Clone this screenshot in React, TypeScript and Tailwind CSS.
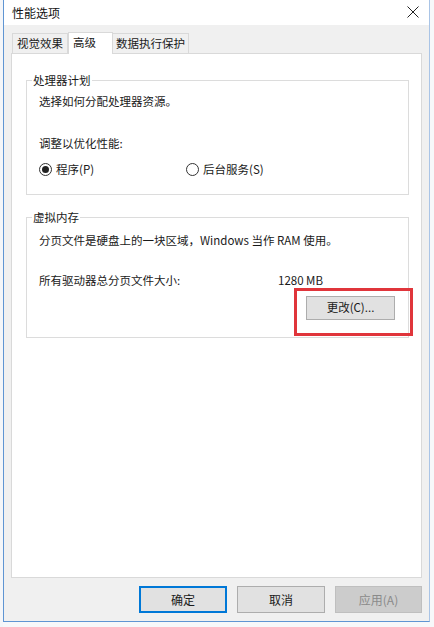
import React from "react";

const font = { fontFamily: '"Noto Sans CJK SC", "Noto Sans", sans-serif' };

function Radio({ checked, label }: { checked: boolean; label: string }) {
  return (
    <div className="flex items-center gap-[4px]">
      <div className="w-[13px] h-[13px] rounded-full border border-[#333333] bg-white flex items-center justify-center">
        {checked && <div className="w-[7px] h-[7px] rounded-full bg-[#222222]" />}
      </div>
      <span>{label}</span>
    </div>
  );
}

export default function App() {
  return (
    <div
      className="w-[434px] h-[627px] bg-[#f7f8fa] flex text-[11.5px] text-[#1a1a1a] leading-none overflow-hidden"
      style={font}
    >
      {/* left background sliver */}
      <div className="w-[3px] h-[627px] bg-[#f4f6f9]" />

      {/* dialog */}
      <div className="w-[427px] h-[622px] border-l border-b border-[#5f95d3] border-r border-r-[#a9c4e6] flex flex-col">
        {/* title bar */}
        <div className="h-[25px] bg-white flex items-center justify-between pl-[8px] pr-[10px] shrink-0">
          <span className="text-[12px] text-[#111]">性能选项</span>
          <svg width="12" height="12" viewBox="0 0 12 12" className="mt-[-2px]">
            <path d="M0.5 0.5 L11.5 11.5 M11.5 0.5 L0.5 11.5" stroke="#222" strokeWidth="1" />
          </svg>
        </div>

        {/* body */}
        <div className="flex-1 bg-[#f0f0f0] flex flex-col pl-[7px] pr-[6px]">
          {/* tabs */}
          <div className="flex items-end h-[28px] pl-[1px]">
            <div className="h-[20px] px-[4px] border border-b-0 border-[#d9d9d9] bg-[#f0f0f0] flex items-center">
              视觉效果
            </div>
            <div className="h-[22px] px-[4px] w-[45px] border border-b-0 border-[#d9d9d9] bg-white flex items-start pt-[4px] mb-[-1px] relative z-10">
              高级
            </div>
            <div className="h-[20px] px-[3px] border border-b-0 border-l-0 border-[#d9d9d9] bg-[#f0f0f0] flex items-center">
              数据执行保护
            </div>
          </div>

          {/* tab page */}
          <div className="h-[525px] w-[411px] bg-white border border-[#d9d9d9] pl-[14px] pt-[20px]">
            {/* group 1 */}
            <fieldset className="w-[383px] h-[121px] border border-[#dcdcdc] pl-[12px] flex flex-col">
              <legend className="ml-[-7px] px-[1px] leading-[13px]">处理器计划</legend>
              <div className="mt-[9px]">选择如何分配处理器资源。</div>
              <div className="mt-[30px]">调整以优化性能:</div>
              <div className="mt-[14px] flex">
                <div className="w-[147px]">
                  <Radio checked label="程序(P)" />
                </div>
                <Radio checked={false} label="后台服务(S)" />
              </div>
            </fieldset>

            {/* group 2 */}
            <fieldset className="mt-[16px] w-[383px] h-[127px] border border-[#dcdcdc] pl-[12px] pr-[12px] flex flex-col">
              <legend className="ml-[-7px] px-[1px] leading-[13px]">虚拟内存</legend>
              <div className="mt-[11px]">分页文件是硬盘上的一块区域，Windows 当作 RAM 使用。</div>
              <div className="mt-[28px] flex">
                <span className="w-[239px]">所有驱动器总分页文件大小:</span>
                <span>1280 MB</span>
              </div>
              <div className="flex justify-end mt-[10px] mr-[1px]">
                <div className="relative">
                  <div className="absolute left-[-12px] top-[-8px] w-[119px] h-[48px] border-[3px] border-[#e0353b] pointer-events-none" />
                  <div className="w-[89px] h-[24px] bg-[#e1e1e1] border border-[#adadad] flex items-center justify-center">
                    更改(C)...
                  </div>
                </div>
              </div>
            </fieldset>
          </div>

          {/* buttons */}
          <div className="flex justify-end gap-[10px] pt-[8px] pr-[1px]">
            <div className="w-[88px] h-[27px] bg-[#e1e1e1] border-2 border-[#0078d7] flex items-center justify-center text-[12px]">
              确定
            </div>
            <div className="w-[88px] h-[27px] bg-[#e1e1e1] border border-[#adadad] flex items-center justify-center text-[12px]">
              取消
            </div>
            <div className="w-[87px] h-[27px] bg-[#cccccc] border border-[#bfbfbf] flex items-center justify-center text-[12px] text-[#8a8a8a]">
              应用(A)
            </div>
          </div>
        </div>
      </div>
    </div>
  );
}
